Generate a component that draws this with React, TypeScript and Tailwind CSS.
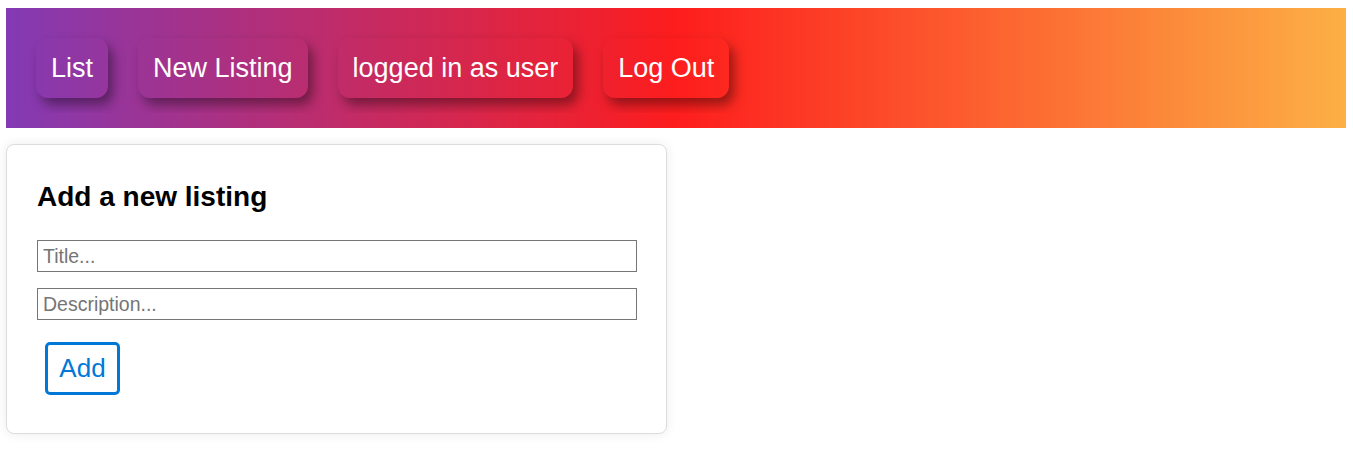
import React from "react";

const navItems = ["List", "New Listing", "logged in as user", "Log Out"];

export default function App() {
  return (
    <div className="min-h-[475px] bg-white pl-[6px] pt-[8px] font-['Liberation_Sans',Arial,sans-serif]">
      <nav className="h-[120px] w-[1340px] bg-linear-to-r/srgb from-[#833ab4] via-[#fd1d1d] to-[#fcb045] pl-[9px]">
        <div className="flex h-[105px] items-start gap-[30px] overflow-hidden pl-[21px] pt-[30px] pr-[40px] w-fit">
          {navItems.map((t) => (
            <a
              key={t}
              href="#"
              className="flex h-[60px] items-center rounded-[12px] px-[15px] text-[27px] text-white shadow-[5px_7px_12px_rgba(0,0,0,0.4)]"
            >
              {t}
            </a>
          ))}
        </div>
      </nav>
      <div className="mt-[16px] w-[661px] rounded-[8px] border border-[#dddddd] bg-white px-[30px] pb-[38px] pt-[36px] shadow-[0_0_12px_rgba(0,0,0,0.08)]">
        <h2 className="text-[28px] font-bold leading-[1.15] text-black">Add a new listing</h2>
        <div className="mt-[27px] flex flex-col gap-[16px]">
          <input
            placeholder="Title..."
            className="h-[32px] w-[600px] border border-[#767676] px-[5px] text-[19.5px] text-black placeholder:text-[#757575] outline-none"
          />
          <input
            placeholder="Description..."
            className="h-[32px] w-[600px] border border-[#767676] px-[5px] text-[19.5px] text-black placeholder:text-[#757575] outline-none"
          />
        </div>
        <button className="ml-[8px] mt-[22px] flex h-[53px] w-[75px] items-center justify-center rounded-[5px] border-[3px] border-[#0078d7] bg-white text-[26px] text-[#0078d7]">
          Add
        </button>
      </div>
    </div>
  );
}
